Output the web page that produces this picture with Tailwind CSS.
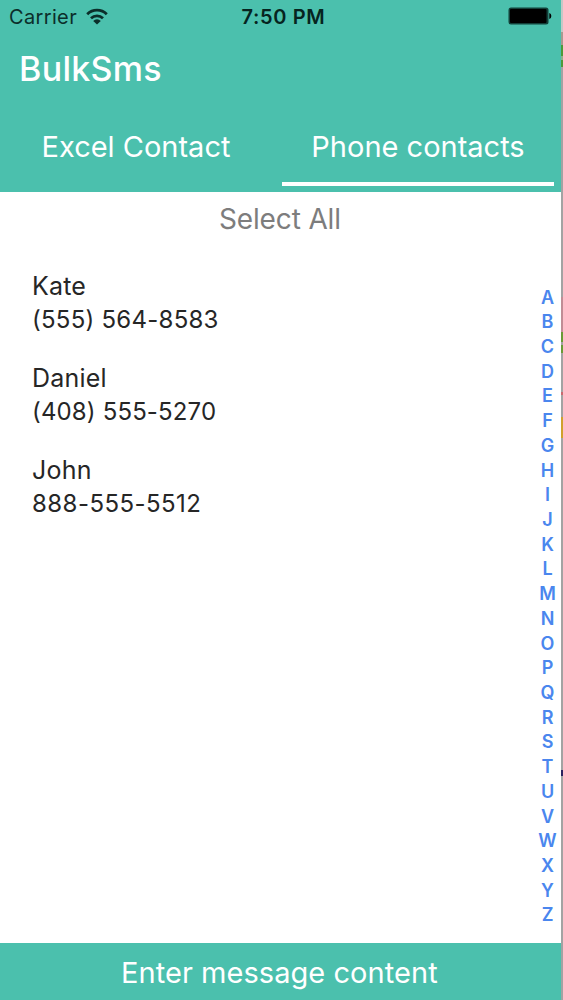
<!DOCTYPE html>
<html lang="en">
<head>
    <meta charset="UTF-8">
    <meta name="viewport" content="width=device-width, initial-scale=1.0">
    <title>BulkSms</title>
    <script src="https://cdn.jsdelivr.net/npm/@tailwindcss/browser@4"></script>
</head>
<body class="w-[563px] h-[1000px] overflow-hidden flex bg-white font-['Inter',sans-serif]">
    <div class="w-[561px] h-full flex flex-col">
        <header class="h-[192px] bg-[#4bc0ad] flex flex-col text-white">
            <!-- Status bar -->
            <div class="h-[33px] grid grid-cols-3 items-center pl-[9px] pr-[9px] text-[#0b2e2a]">
                <div class="flex items-center">
                    <span class="text-[20px] leading-[35px] tracking-[0.35px]">Carrier</span>
                    <svg class="w-[22px] h-[17px] ml-[9px] mb-[3px]" viewBox="0 0 22 17" fill="none" stroke="currentColor" stroke-width="2.8">
                        <path d="M1.2 6.2a14 14 0 0 1 19.6 0"/>
                        <path d="M5 10.3a8.7 8.7 0 0 1 12 0"/>
                        <path d="M11 16.4L7.2 12.9a5.4 5.4 0 0 1 7.6 0z" fill="currentColor" stroke="none"/>
                    </svg>
                </div>
                <span class="pl-[6px] text-center text-[20px] leading-[35px] tracking-[0.65px] font-semibold whitespace-nowrap text-[#062420]">7:50 PM</span>
                <svg class="w-[44px] h-[18px] mb-[3px] justify-self-end" viewBox="0 0 44 18">
                    <rect x="0.5" y="0.5" width="40" height="17" rx="2.5" fill="#123f38"/>
                    <rect x="2" y="2" width="36.5" height="14" rx="1" fill="#000"/>
                    <path d="M41.3 6c1.2.3 2 1.5 2 3s-.8 2.7-2 3z" fill="#000"/>
                </svg>
            </div>
            <h1 class="h-[70px] pl-[19px] text-[34px] leading-[72px] tracking-[0.3px] font-medium">BulkSms</h1>
            <!-- Tabs -->
            <nav class="flex-1 flex">
                <a class="w-[272px] h-[83px] text-center text-[29px] leading-[88px]">Excel Contact</a>
                <a class="w-[272px] h-[83px] ml-[10px] text-center text-[29px] leading-[88px] border-b-4 border-white">Phone contacts</a>
            </nav>
        </header>

        <main class="flex-1 flex">
            <section class="flex-1 flex flex-col">
                <p class="h-[54px] pl-[219px] text-[28px] leading-[55px] tracking-[-0.15px] text-[#7d7d7d]">Select All</p>
                <ul class="pt-[24px] pl-[32px] text-[#262626]">
                    <li class="h-[92px]">
                        <p class="text-[25px] leading-[33px] tracking-[0.2px]">Kate</p>
                        <p class="text-[24px] leading-[33px] tracking-[0.25px]">(555) 564-8583</p>
                    </li>
                    <li class="h-[92px]">
                        <p class="text-[25px] leading-[33px] tracking-[0.2px]">Daniel</p>
                        <p class="text-[24px] leading-[33px] tracking-[0.15px]">(408) 555-5270</p>
                    </li>
                    <li class="h-[92px]">
                        <p class="text-[25px] leading-[33px] tracking-[0.2px]">John</p>
                        <p class="text-[24px] leading-[33px] tracking-[0.45px]">888-555-5512</p>
                    </li>
                </ul>
            </section>
            <!-- Alphabet index -->
            <ol id="index" class="w-[27px] pt-[93.5px] text-center text-[18px] leading-[24.72px] font-semibold text-[#4a86ee]"></ol>
        </main>

        <footer class="h-[57px] bg-[#4bc0ad] pl-[121px] text-[29px] leading-[59px] tracking-[0.05px] text-white whitespace-nowrap">Enter message content</footer>
    </div>

    <!-- Sliver of the desktop behind the phone -->
    <aside class="w-[2px] h-full flex flex-col bg-[#a3a3a3]">
        <div class="h-[32px] bg-[#c4c8c6]"></div>
        <div class="h-[13px] bg-[#aa9a90]"></div>
        <div class="h-[11px] bg-[#4e9a3a]"></div>
        <div class="h-[4px] bg-[#8fb08a]"></div>
        <div class="h-[7px] bg-[#4e9a3a]"></div>
        <div class="h-[230px]"></div>
        <div class="h-[35px] bg-[#c08d95]"></div>
        <div class="h-[10px] bg-[#6a9a35]"></div>
        <div class="h-[3px]"></div>
        <div class="h-[8px] bg-[#6a9a35]"></div>
        <div class="h-[39px]"></div>
        <div class="h-[3px] bg-[#c86a70]"></div>
        <div class="h-[22px]"></div>
        <div class="h-[21px] bg-[#d0a02c]"></div>
        <div class="h-[332px]"></div>
        <div class="h-[6px] bg-[#2b2260]"></div>
    </aside>

    <script>
        const index = document.getElementById('index');
        for (const letter of 'ABCDEFGHIJKLMNOPQRSTUVWXYZ') {
            const li = document.createElement('li');
            li.textContent = letter;
            index.appendChild(li);
        }
    </script>
</body>
</html>
